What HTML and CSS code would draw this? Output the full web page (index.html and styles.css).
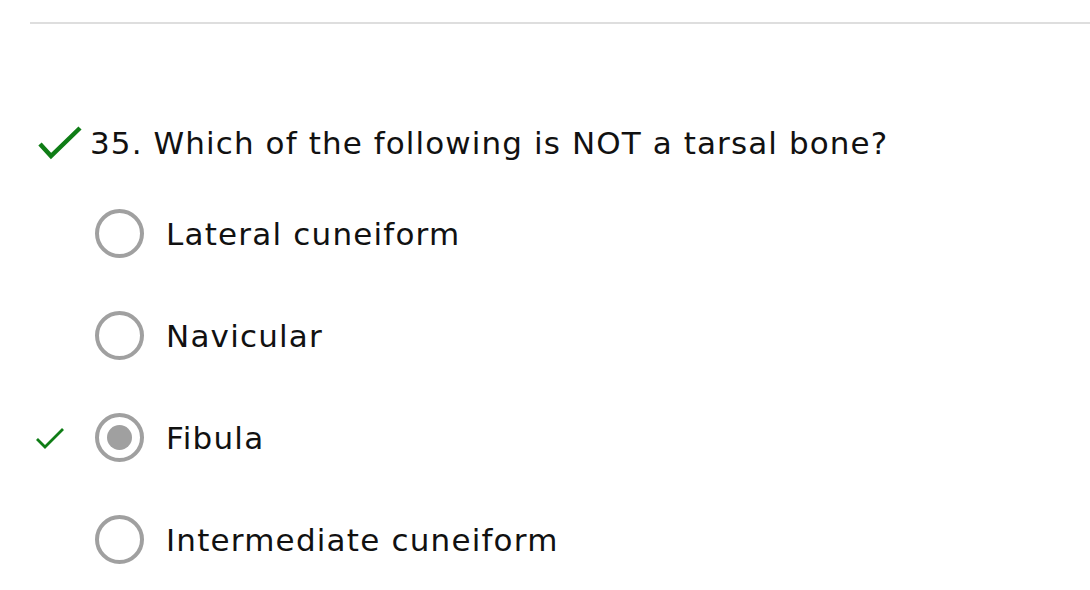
FILE: index.html
```html
<!DOCTYPE html>
<html>
<head>
<meta charset="utf-8">
<link rel="stylesheet" href="styles.css">
</head>
<body>
<div class="page">
  <div class="rule"></div>
  <div class="question">
    <svg class="qcheck" width="46" height="34" viewBox="0 0 46 34"><path d="M3 18 L14 30 L43 2" fill="none" stroke="#0f7d16" stroke-width="4.5"/></svg>
    <span class="qtext">35. Which of the following is NOT a tarsal bone?</span>
  </div>
  <div class="options">
    <div class="option">
      <span class="mark"></span>
      <span class="radio"></span>
      <span class="label">Lateral cuneiform</span>
    </div>
    <div class="option">
      <span class="mark"></span>
      <span class="radio"></span>
      <span class="label">Navicular</span>
    </div>
    <div class="option">
      <span class="mark"><svg width="30" height="22" viewBox="0 0 30 22"><path d="M2 12 L10 20 L28 2" fill="none" stroke="#0f7d16" stroke-width="2.8"/></svg></span>
      <span class="radio checked"></span>
      <span class="label">Fibula</span>
    </div>
    <div class="option">
      <span class="mark"></span>
      <span class="radio"></span>
      <span class="label">Intermediate cuneiform</span>
    </div>
  </div>
</div>
</body>
</html>
```
FILE: styles.css
```css
html, body {
  margin: 0;
  padding: 0;
  background: #fff;
}
body {
  font-family: "DejaVu Sans", Verdana, sans-serif;
  color: #111;
  overflow: hidden;
}
.page {
  padding: 22px 0 0 30px;
}
.rule {
  height: 2px;
  background: #dedede;
}
.question {
  display: flex;
  align-items: center;
  margin-top: 99px;
  height: 40px;
}
.qcheck {
  margin-left: 7px;
  margin-right: 7px;
}
.qtext {
  font-size: 31px;
  line-height: 40px;
  letter-spacing: 1.1px;
}
.options {
  display: flex;
  flex-direction: column;
  margin-top: 46px;
  gap: 53px;
}
.option {
  display: flex;
  align-items: center;
  height: 49px;
}
.mark {
  width: 65px;
  display: flex;
  align-items: center;
  padding-left: 5px;
  box-sizing: border-box;
}
.radio {
  width: 49px;
  height: 49px;
  box-sizing: border-box;
  border: 4px solid #a0a0a0;
  border-radius: 50%;
  display: flex;
  align-items: center;
  justify-content: center;
  flex-shrink: 0;
}
.radio.checked::after {
  content: "";
  width: 25px;
  height: 25px;
  border-radius: 50%;
  background: #a0a0a0;
}
.label {
  margin-left: 22px;
  font-size: 31px;
  letter-spacing: 1.2px;
}
```
